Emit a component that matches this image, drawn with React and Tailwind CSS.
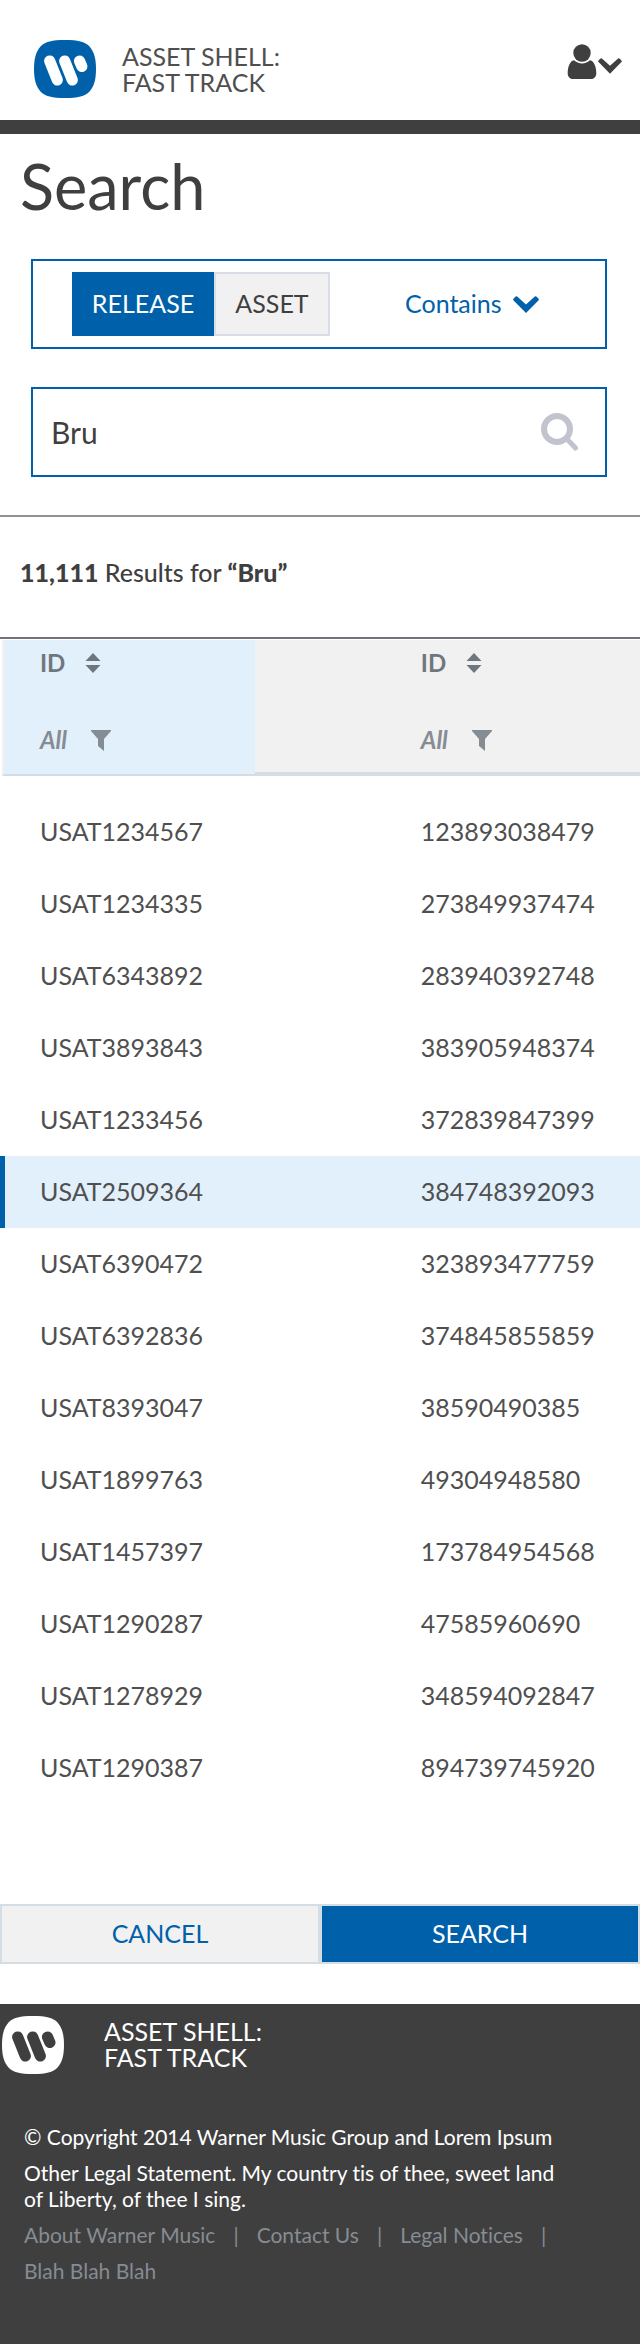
import { useState } from "react";

const ROWS = [
  ["USAT1234567", "123893038479"],
  ["USAT1234335", "273849937474"],
  ["USAT6343892", "283940392748"],
  ["USAT3893843", "383905948374"],
  ["USAT1233456", "372839847399"],
  ["USAT2509364", "384748392093"],
  ["USAT6390472", "323893477759"],
  ["USAT6392836", "374845855859"],
  ["USAT8393047", "38590490385"],
  ["USAT1899763", "49304948580"],
  ["USAT1457397", "173784954568"],
  ["USAT1290287", "47585960690"],
  ["USAT1278929", "348594092847"],
  ["USAT1290387", "894739745920"],
];

const Logo = ({ bg, fg }) => (
  <svg width="62" height="58" viewBox="0 0 62 58" className="shrink-0" aria-hidden="true">
    <path fill={bg} d="M31 0c13 0 20 1.600 24.500 6.500C60 11.500 62 18.500 62 29s-2 17.500-6.500 22.500C51 56.400 44 58 31 58S11 56.400 6.500 51.500C2 46.500 0 39.500 0 29S2 11.500 6.500 6.500C11 1.600 18 0 31 0z" />
    <g stroke={fg} strokeWidth="11.200" strokeLinecap="round">
      <path d="M15.700 21l7.600 19" />
      <path d="M30.700 21l7.600 19" />
      <path d="M45.500 21l2.400 5.400" />
    </g>
  </svg>
);

const Chevron = ({ className }) => (
  <svg viewBox="0 0 26 17" className={className} aria-hidden="true">
    <path fill="currentColor" d="M4.200.6 13 8.400 21.800.6q.9-.7 1.800.2l1.800 1.800q.9.900 0 1.800L13 17 .6 4.400q-.9-.9 0-1.800L2.400.8q.9-.9 1.800-.2z" />
  </svg>
);

const UserIcon = () => (
  <svg width="30" height="36" viewBox="0 0 30 36" aria-hidden="true">
    <circle cx="15" cy="9" r="8.700" fill="currentColor" />
    <path fill="currentColor" d="M7 16.200c2 2 5 3.200 8 3.200s6-1.200 8-3.200c4.400 1 6.300 7 6.300 13 0 3.200-2 5.800-5 5.800H5.700c-3 0-5-2.600-5-5.800 0-6 1.900-12 6.300-13z" />
  </svg>
);

const SearchIcon = () => (
  <svg width="38" height="38" viewBox="0 0 38 38" fill="none" stroke="currentColor" aria-hidden="true">
    <circle cx="16" cy="16" r="13" strokeWidth="6" />
    <path d="M26 26l8.500 9" strokeWidth="5" strokeLinecap="round" />
  </svg>
);

const SortIcon = () => (
  <svg width="16" height="20" viewBox="0 0 16 20" fill="currentColor" aria-hidden="true">
    <path d="M8 0l7.500 8h-15zM8 20L.5 12h15z" />
  </svg>
);

const FilterIcon = () => (
  <svg width="20" height="21" viewBox="0 0 20 21" fill="currentColor" aria-hidden="true">
    <path d="M0 0h20v1l-7 8v12l-6-5V9L0 1z" />
  </svg>
);

const ColumnHead = () => (
  <div className="pl-10 text-left text-2xl leading-8 text-[#6f777e]">
    <button className="flex items-center gap-5 font-bold">ID <SortIcon /></button>
    <button className="mt-[45px] flex items-center gap-6 font-bold italic text-[#868c93]">All <FilterIcon /></button>
  </div>
);

const App = () => {
  const [type, setType] = useState("release");
  const [query, setQuery] = useState("Bru");
  const [selected, setSelected] = useState("USAT2509364");

  return (
    <div className="bg-white font-['Lato',sans-serif] text-[#3f3f3f] [font-variant-ligatures:none]">

      {/* Header */}
      <header className="flex items-start justify-between border-b-[14px] border-[#3f3f3f] pt-10 pr-[18px] pb-[22px] pl-[34px]">
        <div className="flex items-center gap-[26px]">
          <Logo bg="#0061aa" fg="#fff" />
          <p className="text-[25px] leading-[26px] text-[#4f4f4f]">ASSET SHELL:<br />FAST TRACK</p>
        </div>
        <button aria-label="Account" className="mt-1 flex items-center gap-px">
          <UserIcon /><Chevron className="mt-2 w-6" />
        </button>
      </header>

      <main>
        <h1 className="px-5 pt-3 text-[63px] leading-[80px]">Search</h1>

        <form className="space-y-[38px] pt-[33px] pr-[33px] pb-[38px] pl-[31px]" onSubmit={e => e.preventDefault()}>
          <div className="flex h-[90px] items-center justify-between border-2 border-[#0061aa] pr-[66px] pl-[39px]">
            <div className="flex h-16 text-[25px]">
              <button type="button" onClick={() => setType("release")} aria-pressed={type === "release"}
                className="w-[142px] bg-[#0061aa] text-white">RELEASE</button>
              <button type="button" onClick={() => setType("asset")} aria-pressed={type === "asset"}
                className="w-[116px] border-2 border-[#d8dde8] bg-[#f1f1f1]">ASSET</button>
            </div>
            <div className="relative flex items-center text-[#0061aa]">
              <select aria-label="Match" className="w-[134px] appearance-none bg-transparent text-[25px]">
                <option>Contains</option>
                <option>Equals</option>
              </select>
              <Chevron className="pointer-events-none absolute right-0 w-[26px]" />
            </div>
          </div>

          <div className="flex h-[90px] items-center border-2 border-[#0061aa] pr-[26px] pl-[18px]">
            <input aria-label="Search term" value={query} onChange={e => setQuery(e.target.value)}
              className="min-w-0 flex-1 text-[30px] outline-none" />
            <button aria-label="Run search" className="text-[#c1c4ce]"><SearchIcon /></button>
          </div>
        </form>

        <p className="border-t-2 border-[#929292] px-5 pt-[39px] pb-[49px] text-[25px] leading-8 font-medium">
          <b className="font-black">11,111</b> Results for <b className="font-black">“Bru”</b>
        </p>

        <table className="w-full table-fixed border-t-2 border-[#70757d]">
          <thead>
            <tr>
              <th className="w-[59.500%] p-0 pt-px font-normal">
                <div className="ml-0.5 flex h-[136px] border-b-2 border-l-2 border-b-[#d4dce4] border-l-[#f1f1f1] bg-[#f1f1f1]">
                  <div className="w-2/3 bg-[#e2f0fc] pt-[7px] [&>div]:pl-9"><ColumnHead /></div>
                  <div className="flex-1 border-b-2 border-[#d4dce4]" />
                </div>
              </th>
              <th className="p-0 pt-px font-normal">
                <div className="h-[136px] border-b-4 border-[#d4dce4] bg-[#f1f1f1] pt-[7px]"><ColumnHead /></div>
              </th>
            </tr>
          </thead>
          <tbody className="text-[25px] text-[#4f4f4f] before:block before:h-5">
            {ROWS.map(([id, code]) => (
              <tr key={id} onClick={() => setSelected(id)}
                className={id === selected ? "h-[72px] bg-[#e2f0fc] shadow-[inset_5px_0_0_#0061aa]" : "h-[72px]"}>
                <td className="p-0 pl-10">{id}</td>
                <td className="p-0 pl-10">{code}</td>
              </tr>
            ))}
          </tbody>
        </table>

        <div className="mt-[100px] mb-10 grid h-[60px] grid-cols-2 text-[25px]">
          <button className="border-2 border-[#d4dce4] bg-[#f1f1f1] text-[#0061aa]">CANCEL</button>
          <button className="border-2 border-[#d4dce4] bg-[#0061aa] text-white">SEARCH</button>
        </div>
      </main>

      {/* Footer */}
      <footer className="bg-[#3f3f3f] pt-3 pb-[60px] text-[21px] leading-[26px] text-white">
        <div className="flex items-center gap-10 pl-0.5">
          <Logo bg="#fff" fg="#3f3f3f" />
          <p className="pb-0.5 text-[25px]">ASSET SHELL:<br />FAST TRACK</p>
        </div>
        <div className="space-y-2.5 px-6 pt-[50px]">
          <p>© Copyright 2014 Warner Music Group and Lorem Ipsum</p>
          <p>Other Legal Statement. My country tis of thee, sweet land<br />of Liberty, of thee I sing.</p>
          <nav className="flex flex-wrap gap-x-[18px] gap-y-2.5 text-[#868c93]">
            <a href="#about">About Warner Music</a><span>|</span>
            <a href="#contact">Contact Us</a><span>|</span>
            <a href="#legal">Legal Notices</a><span>|</span>
            <a href="#blah" className="basis-full">Blah Blah Blah</a>
          </nav>
        </div>
      </footer>
    </div>
  );
};

export default App;
